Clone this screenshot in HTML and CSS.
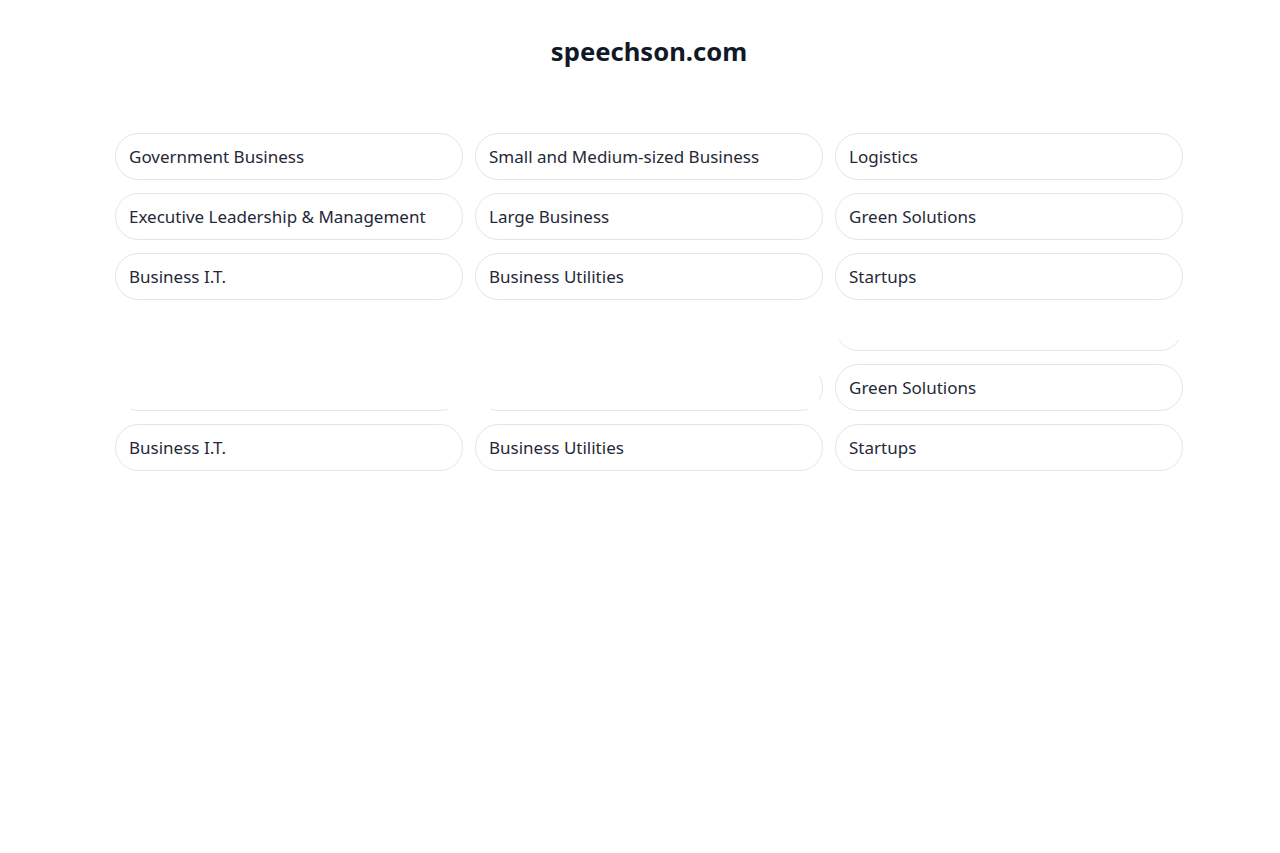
FILE: index.html
```html
<!DOCTYPE html>
<html lang="en">
<head>
<meta charset="utf-8">
<title>speechson.com</title>
<link rel="stylesheet" href="styles.css">
</head>
<body>
<main class="page">
  <h1 class="title">speechson.com</h1>
  <div class="grid">
    <div class="pill">Government Business</div>
    <div class="pill">Small and Medium-sized Business</div>
    <div class="pill">Logistics</div>
    <div class="pill">Executive Leadership &amp; Management</div>
    <div class="pill">Large Business</div>
    <div class="pill">Green Solutions</div>
    <div class="pill">Business I.T.</div>
    <div class="pill">Business Utilities</div>
    <div class="pill">Startups</div>
  </div>
  <div class="ghost">
    <div class="grid">
      <div class="pill">Government Business</div>
      <div class="pill">Small and Medium-sized Business</div>
      <div class="pill">Logistics</div>
      <div class="pill">Executive Leadership &amp; Management</div>
      <div class="pill">Large Business</div>
      <div class="pill">Green Solutions</div>
      <div class="pill">Business I.T.</div>
      <div class="pill">Business Utilities</div>
      <div class="pill">Startups</div>
    </div>
    <div class="mask mask-left"></div>
    <div class="mask mask-right"></div>
  </div>
</main>
</body>
</html>
```
FILE: styles.css
```css
html, body {
  margin: 0;
  padding: 0;
  background: #ffffff;
}
body {
  font-family: "Noto Sans", "Open Sans", "Liberation Sans", sans-serif;
  color: #1f2937;
}
.page {
  width: 1068px;
  margin: 0 auto;
  padding-left: 18px;
  box-sizing: content-box;
}
.title {
  margin: 36px 0 65px 0;
  font-size: 25.6px;
  line-height: 32px;
  font-weight: 700;
  text-align: center;
  color: #111827;
}
.grid {
  display: grid;
  grid-template-columns: repeat(3, 348px);
  column-gap: 12px;
  row-gap: 12px;
}
.pill {
  box-sizing: border-box;
  height: 47px;
  border: 1px solid #e2e4e9;
  border-radius: 24px;
  padding: 0 13px;
  display: flex;
  align-items: center;
  font-size: 17px;
  color: #1f2937;
  white-space: nowrap;
  background: #ffffff;
}
.grid {
  row-gap: 13px;
}
.ghost {
  position: relative;
  margin-top: 4px;
}
.mask {
  position: absolute;
  background: #ffffff;
}
.mask-left {
  left: -10px;
  top: -2px;
  width: 714px;
  height: 107px;
}
.mask-right {
  left: 704px;
  top: -2px;
  width: 380px;
  height: 38px;
}
```
